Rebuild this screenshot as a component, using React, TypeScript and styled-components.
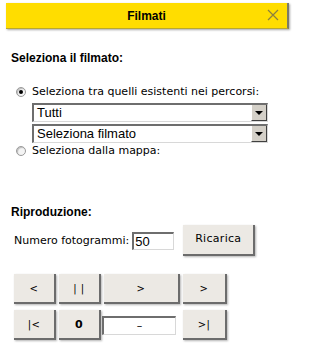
import styled, { createGlobalStyle } from 'styled-components'

const Global = createGlobalStyle`
  html, body {
    margin: 0;
    padding: 0;
    background: #ffffff;
  }
  body {
    width: 298px;
    height: 350px;
    overflow: hidden;
    font-family: "DejaVu Sans", Tahoma, sans-serif;
    color: #000;
  }
`

const Panel = styled.div`
  padding: 3px 9px 0 6px;
`

const Header = styled.div`
  position: relative;
  height: 25px;
  background: #ffdd00;
  border-right: 2px solid #7a7a6a;
  border-bottom: 1px solid #b8a830;
  box-shadow: 1px 1px 2px rgba(0, 0, 0, 0.35);
  display: flex;
  align-items: center;
  justify-content: center;
  font-family: "Liberation Sans", Arial, sans-serif;
  font-size: 12px;
  font-weight: bold;
`

const Close = styled.span`
  position: absolute;
  right: 8px;
  top: 6px;
  width: 12px;
  height: 12px;
`

const SectionTitle = styled.div<{ $top: number }>`
  margin: ${p => p.$top}px 0 0 5px;
  font-family: "Liberation Sans", Arial, sans-serif;
  font-size: 12px;
  font-weight: bold;
  line-height: 14px;
`

const RadioRow = styled.label<{ $top: number }>`
  display: flex;
  align-items: center;
  gap: 6px;
  margin: ${p => p.$top}px 0 0 10px;
  font-size: 11px;
  line-height: 14px;
`

const RadioDot = styled.span<{ $checked?: boolean }>`
  position: relative;
  width: 8px;
  height: 8px;
  border-radius: 50%;
  border: 1px solid #9a9a9a;
  background: #f4f4f4;
  box-shadow: inset 1px 1px 1px #bbb;
  &::after {
    content: '';
    display: ${p => (p.$checked ? 'block' : 'none')};
    position: absolute;
    left: 2px;
    top: 2px;
    width: 4px;
    height: 4px;
    border-radius: 50%;
    background: #000;
  }
`

const Selects = styled.div`
  display: flex;
  flex-direction: column;
  gap: 2px;
  margin: 4px 0 0 26px;
  width: 236px;
`

const Select = styled.div`
  display: flex;
  height: 19px;
  box-sizing: border-box;
  border-top: 2px solid #6e6e6e;
  border-left: 2px solid #6e6e6e;
  border-right: 1px solid #d8d8d8;
  border-bottom: 1px solid #d8d8d8;
  background: #fff;
  font-family: "Liberation Sans", Arial, sans-serif;
  font-size: 13px;
`

const SelectText = styled.span`
  flex: 1;
  padding-left: 3px;
  line-height: 16px;
`

const DropButton = styled.span`
  width: 14px;
  background: #d4d0c8;
  border-left: 1px solid #fff;
  border-right: 1px solid #404040;
  border-bottom: 1px solid #404040;
  display: flex;
  align-items: center;
  justify-content: center;
  &::after {
    content: '';
    border-left: 4px solid transparent;
    border-right: 4px solid transparent;
    border-top: 4px solid #000;
  }
`

const FrameRow = styled.div`
  display: flex;
  align-items: center;
  margin: 6px 0 0 8px;
  font-size: 11px;
`

const NumberBox = styled.div`
  margin-left: 3px;
  width: 42px;
  height: 18px;
  box-sizing: border-box;
  border-top: 2px solid #6e6e6e;
  border-left: 2px solid #6e6e6e;
  border-right: 1px solid #d8d8d8;
  border-bottom: 1px solid #d8d8d8;
  font-family: "Liberation Sans", Arial, sans-serif;
  font-size: 13px;
  line-height: 15px;
  padding-left: 1px;
`

const Button = styled.div<{ $w: number; $h?: number }>`
  width: ${p => p.$w}px;
  height: ${p => p.$h ?? 30}px;
  box-sizing: border-box;
  background: #ece9e4;
  border-right: 2px solid #6c6c6c;
  border-bottom: 2px solid #6c6c6c;
  box-shadow: 1px 1px 2px rgba(0, 0, 0, 0.3);
  display: flex;
  align-items: center;
  justify-content: center;
  font-size: 10px;
  letter-spacing: 0.5px;
`

const ReloadButton = styled(Button)`
  margin-left: 9px;
  font-size: 11px;
  letter-spacing: 0.3px;
  padding-bottom: 3px;
`

const Controls = styled.div`
  display: grid;
  grid-template-columns: 40px 40px 74px 44px;
  grid-auto-rows: 30px;
  column-gap: 5px;
  row-gap: 6px;
  margin: 18px 0 0 8px;
`

const Glyph = styled.span<{ $bold?: boolean }>`
  font-weight: ${p => (p.$bold ? 'bold' : 'normal')};
  font-size: ${p => (p.$bold ? '11px' : '10px')};
`

const Counter = styled.div`
  align-self: center;
  margin: 0 2px 0 -2px;
  height: 19px;
  box-sizing: border-box;
  border-top: 2px solid #6e6e6e;
  border-left: 2px solid #6e6e6e;
  border-right: 1px solid #d8d8d8;
  border-bottom: 1px solid #d8d8d8;
  background: #fff;
  display: flex;
  align-items: center;
  justify-content: center;
  font-size: 11px;
`

const App = () => {
  return (
    <>
      <Global />
      <Panel>
        <Header>
          Filmati
          <Close>
            <svg width="12" height="12" viewBox="0 0 12 12">
              <path d="M1 1 L11 11 M11 1 L1 11" stroke="#8a8040" strokeWidth="1.2" fill="none" />
            </svg>
          </Close>
        </Header>

        <SectionTitle $top={22}>Seleziona il filmato:</SectionTitle>

        <RadioRow $top={20}>
          <RadioDot $checked />
          Seleziona tra quelli esistenti nei percorsi:
        </RadioRow>
        <Selects>
          <Select>
            <SelectText>Tutti</SelectText>
            <DropButton />
          </Select>
          <Select>
            <SelectText>Seleziona filmato</SelectText>
            <DropButton />
          </Select>
        </Selects>
        <RadioRow $top={1}>
          <RadioDot />
          Seleziona dalla mappa:
        </RadioRow>

        <SectionTitle $top={47}>Riproduzione:</SectionTitle>

        <FrameRow>
          Numero fotogrammi:
          <NumberBox>50</NumberBox>
          <ReloadButton $w={72} $h={31}>Ricarica</ReloadButton>
        </FrameRow>

        <Controls>
          <Button $w={42}><Glyph>&lt;</Glyph></Button>
          <Button $w={42}><Glyph>| |</Glyph></Button>
          <Button $w={76}><Glyph>&gt;</Glyph></Button>
          <Button $w={44}><Glyph>&gt;</Glyph></Button>
          <Button $w={42}><Glyph>|&lt;</Glyph></Button>
          <Button $w={42}><Glyph $bold>0</Glyph></Button>
          <Counter>–</Counter>
          <Button $w={44}><Glyph>&gt;|</Glyph></Button>
        </Controls>
      </Panel>
    </>
  )
}

export default App
